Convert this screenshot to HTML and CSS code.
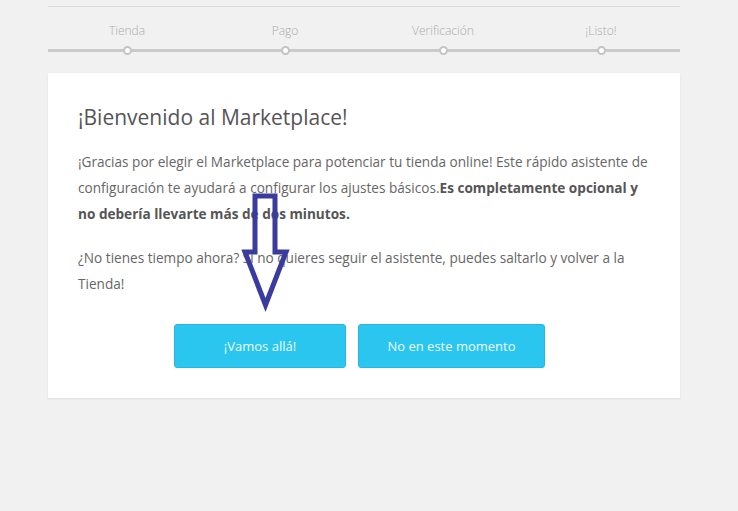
FILE: index.html
```html
<!DOCTYPE html>
<html lang="es">
<head>
<meta charset="utf-8">
<title>Marketplace</title>
<link rel="stylesheet" href="styles.css">
</head>
<body>
<div class="wrap">
  <div class="topline"></div>
  <ol class="steps">
    <li class="step"><span class="label">Tienda</span><span class="dot"></span></li>
    <li class="step"><span class="label">Pago</span><span class="dot"></span></li>
    <li class="step"><span class="label">Verificación</span><span class="dot"></span></li>
    <li class="step"><span class="label">¡Listo!</span><span class="dot"></span></li>
  </ol>
  <section class="card">
    <h1 class="title">¡Bienvenido al Marketplace!</h1>
    <p class="text">¡Gracias por elegir el Marketplace para potenciar tu tienda online! Este rápido asistente de configuración te ayudará a configurar los ajustes básicos.<strong>Es completamente opcional y no debería llevarte más de dos minutos.</strong></p>
    <p class="text">¿No tienes tiempo ahora? Si no quieres seguir el asistente, puedes saltarlo y volver a la Tienda!</p>
    <div class="actions">
      <a class="btn btn-go" href="#">¡Vamos allá!</a>
      <a class="btn btn-skip" href="#">No en este momento</a>
    </div>
  </section>
</div>
<svg class="arrow" width="60" height="130" viewBox="235 188 60 130" aria-hidden="true">
  <polygon points="255,196 275,196 275,252 286,252 265.5,305 245,252 255,252" fill="none" stroke="#3a3b9f" stroke-width="5" stroke-linejoin="miter"/>
</svg>
</body>
</html>
```

FILE: styles.css
```css
html, body {
  margin: 0;
  padding: 0;
  background: #f1f1f1;
}
body {
  font-family: "Open Sans", "Noto Sans", sans-serif;
  color: #666;
  width: 738px;
  height: 511px;
  overflow: hidden;
  position: relative;
}
.wrap {
  margin-left: 48px;
  width: 632px;
  padding-top: 6px;
}
.topline {
  height: 1px;
  background: #dcdcdc;
}
.steps {
  list-style: none;
  margin: 0;
  padding: 16px 0 0;
  display: grid;
  grid-template-columns: repeat(4, 1fr);
  align-items: start;
  background: linear-gradient(#cbcbcb, #cbcbcb) no-repeat 0 42px / 100% 3px;
  height: 50px;
  box-sizing: border-box;
}
.step {
  display: flex;
  flex-direction: column;
  align-items: center;
}
.label {
  font-size: 12px;
  line-height: 16px;
  color: #ababab;
  font-weight: 300;
}
.dot {
  margin-top: 7px;
  width: 5px;
  height: 5px;
  border: 2px solid #c4c4c4;
  border-radius: 50%;
  background: #fff;
}
.card {
  margin-top: 16px;
  background: #fff;
  box-shadow: 0 1px 2px rgba(0,0,0,0.08);
  padding: 29px 29px 30px 30px;
  height: 325px;
  box-sizing: border-box;
}
.title {
  margin: 0 0 17px;
  font-size: 21px;
  line-height: 30px;
  font-weight: 400;
  color: #555;
}
.text {
  margin: 0 0 18px;
  font-size: 13.6px;
  line-height: 26px;
  color: #666;
}
.text strong {
  color: #555;
  font-weight: 700;
}
.actions {
  display: flex;
  justify-content: center;
  gap: 12px;
  margin-top: 27px;
  padding-right: 10px;
}
.btn {
  display: flex;
  align-items: center;
  justify-content: center;
  height: 44px;
  background: #2bc6ef;
  color: #eefaff;
  font-size: 13px;
  text-decoration: none;
  border-radius: 3px;
  border: 1px solid #25b9e2;
  box-sizing: border-box;
}
.btn-go { width: 172px; }
.btn-skip { width: 187px; }
.arrow {
  position: absolute;
  left: 235px;
  top: 188px;
}
```
